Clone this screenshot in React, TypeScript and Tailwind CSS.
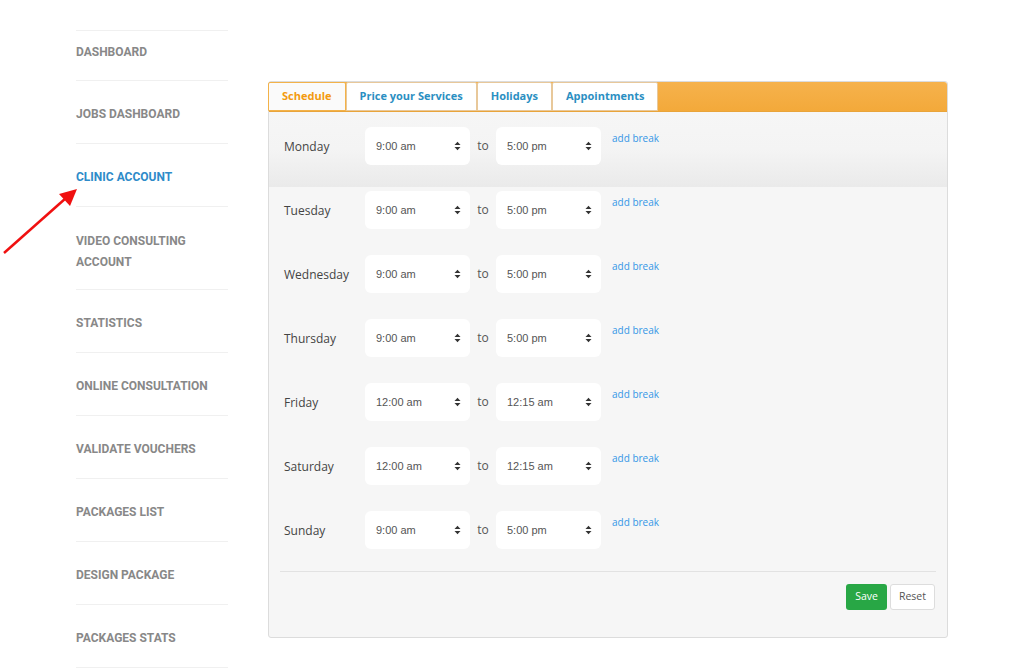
import React from "react";

const navItems = [
  "DASHBOARD",
  "JOBS DASHBOARD",
  "CLINIC ACCOUNT",
  "VIDEO CONSULTING ACCOUNT",
  "STATISTICS",
  "ONLINE CONSULTATION",
  "VALIDATE VOUCHERS",
  "PACKAGES LIST",
  "DESIGN PACKAGE",
  "PACKAGES STATS",
];

const tabs = ["Schedule", "Price your Services", "Holidays", "Appointments"];

const days = [
  { day: "Monday", from: "9:00 am", to: "5:00 pm" },
  { day: "Tuesday", from: "9:00 am", to: "5:00 pm" },
  { day: "Wednesday", from: "9:00 am", to: "5:00 pm" },
  { day: "Thursday", from: "9:00 am", to: "5:00 pm" },
  { day: "Friday", from: "12:00 am", to: "12:15 am" },
  { day: "Saturday", from: "12:00 am", to: "12:15 am" },
  { day: "Sunday", from: "9:00 am", to: "5:00 pm" },
];

function Caret() {
  return (
    <svg width="7" height="10" viewBox="0 0 7 10" className="shrink-0">
      <path d="M0.5 4 L3.5 0.8 L6.5 4 Z" fill="#333" />
      <path d="M0.5 6 L3.5 9.2 L6.5 6 Z" fill="#333" />
    </svg>
  );
}

function TimeSelect({ value }: { value: string }) {
  return (
    <div className="w-[105px] h-[38px] bg-white rounded-md flex items-center justify-between pl-[11px] pr-[9px] text-[11px] text-[#555]" style={{ fontFamily: '"Liberation Sans", Arial, sans-serif' }}>
      <span>{value}</span>
      <Caret />
    </div>
  );
}

export default function App() {
  return (
    <div className="relative w-[1024px] h-[672px] bg-white overflow-hidden flex">
      {/* sidebar */}
      <div className="w-[228px] pl-[76px] pt-[30px] shrink-0" style={{ fontFamily: 'Roboto, "Liberation Sans", sans-serif' }}>
        <ul className="border-t border-[#f0f0f0]">
          {navItems.map((item, i) => (
            <li
              key={item}
              className={`border-b border-[#f0f0f0] ${i === 0 ? "pt-[11px] pb-[17px]" : i === 3 ? "pt-[24px] pb-[16px]" : "pt-[23px] pb-[18px]"} text-[12px] leading-[21px] font-bold ${
                item === "CLINIC ACCOUNT" ? "text-[#2e8bc9]" : "text-[#888888]"
              }`}
            >
              {item === "VIDEO CONSULTING ACCOUNT" ? (
                <>
                  VIDEO CONSULTING
                  <br />
                  ACCOUNT
                </>
              ) : (
                item
              )}
            </li>
          ))}
        </ul>
      </div>

      {/* red arrow */}
      <svg className="absolute left-0 top-[180px]" width="90" height="80" viewBox="0 180 90 80">
        <line x1="4" y1="253" x2="66" y2="198" stroke="#f01010" strokeWidth="2.5" />
        <polygon points="77,189 70,206 59,194" fill="#f01010" />
      </svg>

      {/* main panel */}
      <div className="pl-[40px] pt-[81px]" style={{ fontFamily: '"Open Sans", "Noto Sans", sans-serif' }}>
        <div className="w-[680px] h-[557px] border border-[#dcdcdc] rounded-[3px] bg-[#f6f6f6] flex flex-col">
          <div className="h-[30px] flex items-end bg-gradient-to-b from-[#f6b24c] to-[#f3a93a] rounded-t-[3px] border-b border-[#e9a43a]">
            {tabs.map((t, i) => (
              <div
                key={t}
                className={`h-[29px] flex items-center px-[13px] text-[11px] font-bold border rounded-t-[2px] ${
                  i === 0
                    ? "bg-[#fafafa] text-[#f39a10] border-[#f3b249] -ml-px"
                    : "bg-white text-[#2b8fc2] border-[#e8c89a]"
                }`}
              >
                {t}
              </div>
            ))}
          </div>

          <div className="flex flex-col">
            {days.map((d, i) => (
              <div
                key={d.day}
                className={`flex items-start pl-[15px] ${i === 0 ? "pt-[15px] bg-gradient-to-b from-[#f6f6f6] via-[#f4f4f4] to-[#eaeaea]" : "pt-[4px]"} pb-[22px]`}
              >
                <div className="w-[81px] h-[38px] flex items-center pt-px text-[12px] text-[#444]">{d.day}</div>
                <TimeSelect value={d.from} />
                <div className="w-[26px] h-[38px] flex items-center justify-center text-[12px] text-[#555]">to</div>
                <TimeSelect value={d.to} />
                <a className="ml-[11px] mt-[4px] text-[10px] text-[#3596e6]">add break</a>
              </div>
            ))}
          </div>

          <div className="mx-[11px] border-t border-[#e2e2e2]" />
          <div className="flex justify-end gap-[3px] pr-[12px] pt-[12px]">
            <button className="h-[26px] px-[9px] bg-[#28a745] text-white text-[10.5px] rounded-[3px]">Save</button>
            <button className="h-[26px] px-[8px] bg-white text-[#555] text-[10.5px] rounded-[3px] border border-[#dddddd]">Reset</button>
          </div>
        </div>
      </div>
    </div>
  );
}
